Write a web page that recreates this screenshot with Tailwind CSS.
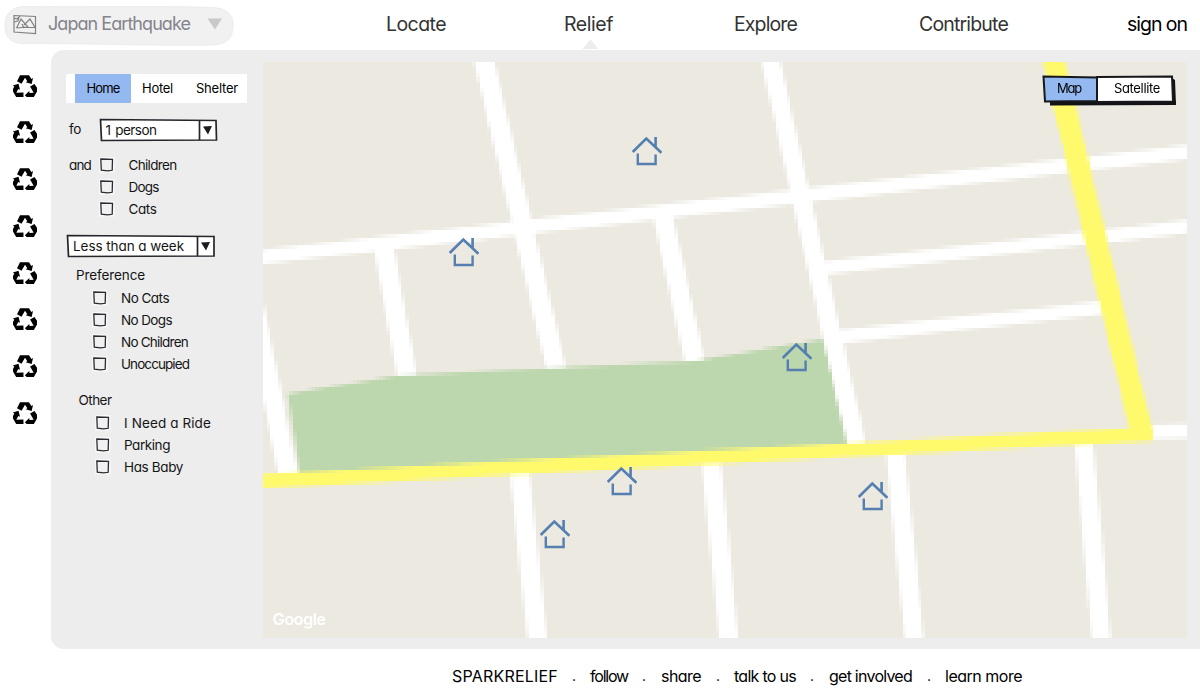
<!DOCTYPE html>
<html lang="en">
<head>
<meta charset="utf-8">
<title>Sparkrelief</title>
<script src="https://cdn.jsdelivr.net/npm/@tailwindcss/browser@4"></script>
</head>
<body class="bg-white">
<svg class="hidden">
  <symbol id="recycle" viewBox="0 0 72 66">
    <g id="arrow-set">
      <path id="arrow" d="M12 19L21 1H48L55 12L60 9L56 27L38 22L43 18.500L36 8L25.500 26.500Z"/>
      <use href="#arrow" transform="rotate(120 36 38)"/>
      <use href="#arrow" transform="rotate(240 36 38)"/>
    </g>
  </symbol>
  <symbol id="house" viewBox="0 0 30 30">
    <path d="M.7 16L14.3 2.6L29.4 16.8M23.6 1V11" fill="none" stroke="#557fb0" stroke-width="2.6"/>
    <path d="M5.8 17.5V28H23.6V18.5" fill="none" stroke="#557fb0" stroke-width="2.4"/>
  </symbol>
  <symbol id="box" viewBox="0 0 16 16">
    <path d="M0 0H15.500V15.500H0Z" fill="#f8f8f8"/>
    <path d="M1.800 2L13.500 2.400L13.200 13.300L8.500 13.900L2.300 13.200Z" fill="#f1f1f1" stroke="#2c2b33" stroke-width="1.3"/>
  </symbol>
</svg>
<div class="relative flex h-[700px] w-[1200px] flex-col overflow-hidden font-['Inter',sans-serif] text-[13.500px] text-[#151515] [font-feature-settings:'cv11']">
  <header class="flex h-[50px] items-start text-[19.500px] leading-[24px] text-[#333]">
    <div class="relative ml-[4px] h-[46px] w-[230px] shrink-0 text-[18px] text-[#84848d]">
      <svg class="absolute inset-0" width="230" height="46" viewBox="0 0 230 46"><path d="M20 6.500C80 7.500 150 5.500 208 7.500C222 8 229 14 229 24C229 38 224 44 208 45C150 46 70 43 18 43.500C5 43 1 35 1 25C1 13 8 7 20 6.500Z" fill="#f1f1f1" stroke="#ececec"/></svg>
      <div class="relative flex items-center pl-[9px] pt-[12px]">
        <svg class="shrink-0" width="24" height="21" viewBox="0 0 24 21" fill="none" stroke="#828282" stroke-width="1.2"><path d="M1 1.500L22.500 2.500V19.500L1 18Z"/><path d="M1 4L4 5L7 2M6 3L5 7L1 8M3.500 14L8 5L15 13L3.500 14M9 10L11 14M11 11L17 5L22 13.500L12 13.500"/></svg>
        <span data-w="142" class="ml-[11px] inline-block w-[142px] shrink-0 whitespace-nowrap">Japan Earthquake</span>
        <svg class="ml-[17px] shrink-0" width="16" height="12" viewBox="0 0 16 12"><path d="M.5.500H15L8 11.500Z" fill="#c9c9c9"/></svg>
      </div>
    </div>
    <nav class="flex shrink-0 whitespace-nowrap pt-[12px]">
      <a data-w="60" class="ml-[152px] w-[60px]">Locate</a>
      <a data-w="49" class="relative ml-[118px] w-[49px]">Relief<svg class="absolute left-[18px] top-[27px]" width="17" height="11" viewBox="0 0 17 11"><path d="M.5 10L8.500.500L16.500 10Z" fill="#ededed"/></svg></a>
      <a data-w="63" class="ml-[121px] w-[63px]">Explore</a>
      <a data-w="89" class="ml-[122px] w-[89px]">Contribute</a>
      <a data-w="60" class="ml-[119px] w-[60px] text-black">sign on</a>
    </nav>
  </header>
  <div class="flex h-[599px]">
    <aside class="flex w-[51px] flex-col gap-[24.800px] pl-[13px] pt-[24.500px]">
      <svg width="24" height="22"><use href="#recycle"/></svg>
      <svg width="24" height="22"><use href="#recycle"/></svg>
      <svg width="24" height="22"><use href="#recycle"/></svg>
      <svg width="24" height="22"><use href="#recycle"/></svg>
      <svg width="24" height="22"><use href="#recycle"/></svg>
      <svg width="24" height="22"><use href="#recycle"/></svg>
      <svg width="24" height="22"><use href="#recycle"/></svg>
      <svg width="24" height="22"><use href="#recycle"/></svg>
    </aside>
    <main class="flex w-[1149px] rounded-l-[13px] bg-[#ededed] pt-[12px]">
      <section class="w-[212px] whitespace-nowrap pl-[15px] leading-[22px]">
        <div class="mt-[12px] flex h-[29px] w-[181px] items-center bg-white pl-[9px] text-[13px] text-black">
          <div class="flex h-full w-[56px] items-center justify-center bg-[#94b9f1]"><span data-w="33" class="mb-[2px] w-[33px]">Home</span></div>
          <span data-w="31" class="mb-[2px] ml-[11px] w-[31px]">Hotel</span>
          <span data-w="42" class="mb-[2px] ml-[23px] w-[42px]">Shelter</span>
        </div>
        <div class="mt-[15px] flex h-[24px] items-center pl-[3px]">
          <span data-w="12" class="-mt-[2px] w-[13px]">fo</span>
          <div class="relative ml-[16.500px] h-[24px] w-[119px]">
            <svg class="absolute inset-0" width="119" height="24" viewBox="0 0 119 24"><path d="M1.500 1.500L117 2.500L117.500 22L2.500 22.500Z" fill="#fff" stroke="#25252b" stroke-width="1.700"/><path d="M100.500 2V22" stroke="#25252b" stroke-width="1.700"/><path d="M104 8.500L113 8L109 16.500Z" fill="#1c1c20"/></svg>
            <span data-w="51" class="relative ml-[7px] leading-[25px] [word-spacing:1.500px]">1 person</span>
          </div>
        </div>
        <div class="mt-[12px] flex h-[22px] items-center pl-[3px]"><span data-w="22" class="w-[22px]">and</span><svg class="ml-[8px]" width="16" height="16"><use href="#box"/></svg><span data-w="48" class="ml-[13.500px]">Children</span></div>
        <div class="flex h-[22px] items-center pl-[33px]"><svg width="16" height="16"><use href="#box"/></svg><span data-w="30" class="ml-[13.500px]">Dogs</span></div>
        <div class="flex h-[22px] items-center pl-[33px]"><svg width="16" height="16"><use href="#box"/></svg><span data-w="28" class="ml-[13.500px]">Cats</span></div>
        <div class="relative mt-[14px] h-[24px] w-[149px]">
          <svg class="absolute inset-0" width="149" height="24" viewBox="0 0 149 24"><path d="M1.500 1.500L148 2.500L148 22L2.500 22.500Z" fill="#fff" stroke="#25252b" stroke-width="1.700"/><path d="M131.500 2V22" stroke="#25252b" stroke-width="1.700"/><path d="M135 8.500L144 8L140 16.500Z" fill="#1c1c20"/></svg>
          <span data-w="111" class="relative ml-[7px] leading-[24px]">Less than a week</span>
        </div>
        <div class="mt-[6px] pl-[10px]"><span data-w="69">Preference</span></div>
        <div class="mt-[1px] flex h-[22px] items-center pl-[26px]"><svg width="16" height="16"><use href="#box"/></svg><span data-w="48" class="ml-[13px]">No Cats</span></div>
        <div class="flex h-[22px] items-center pl-[26px]"><svg width="16" height="16"><use href="#box"/></svg><span data-w="51" class="ml-[13px]">No Dogs</span></div>
        <div class="flex h-[22px] items-center pl-[26px]"><svg width="16" height="16"><use href="#box"/></svg><span data-w="67" class="ml-[13px]">No Children</span></div>
        <div class="flex h-[22px] items-center pl-[26px]"><svg width="16" height="16"><use href="#box"/></svg><span data-w="68" class="ml-[13px]">Unoccupied</span></div>
        <div class="mt-[14px] pl-[12.500px]"><span data-w="33">Other</span></div>
        <div class="mt-[1px] flex h-[22px] items-center pl-[29px]"><svg width="16" height="16"><use href="#box"/></svg><span data-w="87" class="ml-[13px]">I Need a Ride</span></div>
        <div class="flex h-[22px] items-center pl-[29px]"><svg width="16" height="16"><use href="#box"/></svg><span data-w="46" class="ml-[13px]">Parking</span></div>
        <div class="flex h-[22px] items-center pl-[29px]"><svg width="16" height="16"><use href="#box"/></svg><span data-w="59" class="ml-[13px]">Has Baby</span></div>
      </section>
      <section class="relative h-[575.500px] w-[924px] overflow-hidden bg-[#ece9e1]">
        <canvas id="map" width="247" height="154" class="absolute left-0 top-0 h-[575.500px] w-[924px] [image-rendering:pixelated]"></canvas>
        <svg class="absolute left-[369px] top-[74px]" width="30" height="30"><use href="#house"/></svg>
        <svg class="absolute left-[186px] top-[175px]" width="30" height="30"><use href="#house"/></svg>
        <svg class="absolute left-[519px] top-[280px]" width="30" height="30"><use href="#house"/></svg>
        <svg class="absolute left-[344px] top-[404px]" width="30" height="30"><use href="#house"/></svg>
        <svg class="absolute left-[277px] top-[457px]" width="30" height="30"><use href="#house"/></svg>
        <svg class="absolute left-[595px] top-[419px]" width="30" height="30"><use href="#house"/></svg>
        <div class="absolute left-[779px] top-[13px] h-[32px] w-[136px] text-[13px] text-black">
          <svg class="absolute inset-0" width="136" height="32" viewBox="0 0 136 32">
            <path d="M8 26H134V30L8 30.500ZM130 3L133 5L134 30H130Z" fill="#111316"/>
            <path d="M1.500 1.500L55 2.500V26L3 26.500Z" fill="#94b9f1" stroke="#17181c" stroke-width="2"/>
            <path d="M55 2L130 1.500L131 26.500L55 27Z" fill="#fff" stroke="#17181c" stroke-width="2"/>
          </svg>
          <div class="relative flex pl-[15px] leading-[27px]"><span data-w="24" class="w-[24px]">Map</span><span data-w="46" class="ml-[33px] w-[46px]">Satellite</span></div>
        </div>
        <span data-w="53" class="absolute left-[9.500px] top-[545px] whitespace-nowrap text-[16.500px] font-semibold leading-[24px] text-white">Google</span>
      </section>
    </main>
  </div>
  <footer class="flex items-center whitespace-nowrap pl-[452px] pt-[16px] text-[16px] leading-[22px] text-black">
    <span data-w="106" class="w-[106px]">SPARKRELIEF</span><span class="ml-[14px] w-[18px] text-[14px]">.</span>
    <span data-w="38" class="w-[38px]">follow</span><span class="ml-[14px] w-[19px] text-[14px]">.</span>
    <span data-w="40" class="w-[40px]">share</span><span class="ml-[15px] w-[18px] text-[14px]">.</span>
    <span data-w="62" class="w-[62px]">talk to us</span><span class="ml-[14px] w-[19px] text-[14px]">.</span>
    <span data-w="83" class="w-[83px]">get involved</span><span class="ml-[15px] w-[18px] text-[14px]">.</span>
    <span data-w="77" class="w-[77px]">learn more</span>
  </footer>
</div>
<script>
  // Fit each label to its width by tracking.
  function fitLabels() {
    for (const el of document.querySelectorAll('[data-w]')) {
      el.style.letterSpacing = '0.001px';
      const range = document.createRange();
      range.selectNodeContents(el.firstChild);
      const w = +el.dataset.w;
      const n = el.firstChild.length;
      el.style.letterSpacing = (w - range.getBoundingClientRect().width) / n + 'px';
    }
  }
  fitLabels();
  window.addEventListener('load', fitLabels);
  document.fonts.ready.then(fitLabels);
  new ResizeObserver(fitLabels).observe(document.querySelector('header'));

  // Low-resolution street map, scaled up in blocks.
  const c = document.getElementById('map').getContext('2d');
  c.scale(247 / 924, 154 / 575.5);
  c.translate(-263, -62);
  c.fillStyle = '#ece9e1';
  c.fillRect(263, 62, 924, 576);
  const road = (x1, y1, x2, y2, w, color = '#fff') => {
    c.strokeStyle = color; c.lineWidth = w;
    c.beginPath(); c.moveTo(x1, y1); c.lineTo(x2, y2); c.stroke();
  };
  road(483.500, 58, 558.500, 378, 19.500);
  road(255, 257.600, 1195, 151.600, 14);
  road(822, 268.500, 1195, 225.500, 13);
  road(835, 336.500, 1103, 307.500, 13);
  road(383.500, 246, 407.500, 378, 19.500);
  road(662, 212, 696, 366, 19.500);
  road(252.500, 297, 288.500, 476, 19);
  road(519.500, 470, 538, 645, 19.500);
  road(711, 458, 729.500, 645, 19);
  road(895, 448, 915, 645, 19);
  road(1083.500, 438, 1102, 645, 19);
  road(1145, 431.500, 1195, 430.500, 14);
  c.fillStyle = '#bcd6ad';
  c.beginPath();
  for (const [x, y] of [[288, 394], [395, 376], [555, 367.500], [695, 360.500], [823, 339], [850, 444], [300, 474]]) c.lineTo(x, y);
  c.fill();
  road(770, 58, 856.500, 444, 18.500);
  road(1053, 58, 1143, 438, 22, '#fffa6b');
  road(255, 481.200, 1153, 433.500, 14, '#fffa6b');
</script>
</body>
</html>
